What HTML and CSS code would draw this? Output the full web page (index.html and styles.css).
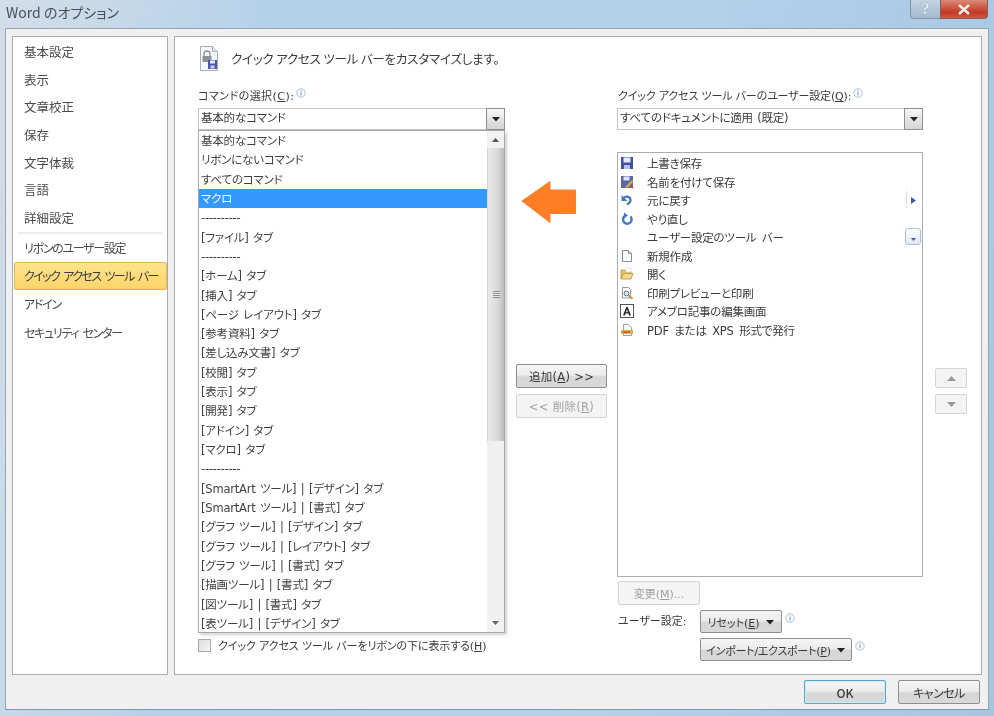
FILE: index.html
```
<!DOCTYPE html>
<html lang="ja">
<head>
<meta charset="utf-8">
<title>Word のオプション</title>
<link rel="stylesheet" href="styles.css">
</head>
<body>
<svg class="defs" width="0" height="0" aria-hidden="true">
  <symbol id="info" viewBox="0 0 10 10"><circle cx="5" cy="5" r="4.2" fill="#fff" stroke="#9db9dc" stroke-width=".9"/><rect x="4.5" y="4.2" width="1.1" height="3.2" fill="#6f97c9"/><rect x="4.5" y="2.4" width="1.1" height="1.1" fill="#6f97c9"/></symbol>
  <symbol id="down" viewBox="0 0 10 6"><path d="M1 1h8L5 5.4z" fill="#222"/></symbol>
</svg>
<div class="window">
  <header class="titlebar">
    <span class="title">Word のオプション</span>
    <div class="caption">
      <span class="cap-help">?</span>
      <span class="cap-close">
        <svg width="14" height="11" viewBox="0 0 14 11"><path d="M2 1l10 9M12 1L2 10" stroke="#f4e9e6" stroke-width="2.6"/></svg>
      </span>
    </div>
  </header>
  <div class="client">
    <div class="panels">
      <nav class="nav">
        <div class="nav-group">
          <div class="nav-item">基本設定</div>
          <div class="nav-item">表示</div>
          <div class="nav-item">文章校正</div>
          <div class="nav-item">保存</div>
          <div class="nav-item">文字体裁</div>
          <div class="nav-item">言語</div>
          <div class="nav-item">詳細設定</div>
        </div>
        <div class="nav-sep"></div>
        <div class="nav-group">
          <div class="nav-item2">リボンのユーザー設定</div>
          <div class="nav-item2 selected">クイック アクセス ツール バー</div>
          <div class="nav-item2">アドイン</div>
          <div class="nav-item2">セキュリティ センター</div>
        </div>
      </nav>
      <main class="main">
        <div class="heading">
          <svg class="heading-icon" width="20" height="27" viewBox="0 0 20 27">
            <path d="M1.5 1.5h12l5 5v19h-17z" fill="#f7f9fb" stroke="#9fb0c2"/>
            <path d="M13.5 1.5v5h5" fill="#dfe6ee" stroke="#9fb0c2"/>
            <path d="M5 11V9a3 3 0 0 1 6 0v2" fill="none" stroke="#8b8f96" stroke-width="1.3"/>
            <rect x="3.5" y="11" width="9" height="6" fill="#8d9199"/>
            <rect x="9" y="15" width="9" height="9" fill="#4a57b0"/>
            <rect x="11" y="15.5" width="5" height="3" fill="#e8ecf7"/>
            <rect x="11.5" y="20.5" width="4" height="3" fill="#c9cfe8"/>
          </svg>
          <span>クイック アクセス ツール バーをカスタマイズします。</span>
        </div>
        <div class="columns">
          <section class="col-left">
            <div class="label label-l">コマンドの選択(<u>C</u>):<svg class="info" width="10" height="10"><use href="#info"/></svg></div>
            <div class="combo">
              <span class="combo-text">基本的なコマンド</span>
              <span class="combo-btn"><svg width="10" height="6"><use href="#down"/></svg></span>
            </div>
            <div class="drop">
              <div class="drop-rows">
                <div class="row">基本的なコマンド</div>
                <div class="row">リボンにないコマンド</div>
                <div class="row">すべてのコマンド</div>
                <div class="row active">マクロ</div>
                <div class="row">----------</div>
                <div class="row">[ファイル] タブ</div>
                <div class="row">----------</div>
                <div class="row">[ホーム] タブ</div>
                <div class="row">[挿入] タブ</div>
                <div class="row">[ページ レイアウト] タブ</div>
                <div class="row">[参考資料] タブ</div>
                <div class="row">[差し込み文書] タブ</div>
                <div class="row">[校閲] タブ</div>
                <div class="row">[表示] タブ</div>
                <div class="row">[開発] タブ</div>
                <div class="row">[アドイン] タブ</div>
                <div class="row">[マクロ] タブ</div>
                <div class="row">----------</div>
                <div class="row">[SmartArt ツール] | [デザイン] タブ</div>
                <div class="row">[SmartArt ツール] | [書式] タブ</div>
                <div class="row">[グラフ ツール] | [デザイン] タブ</div>
                <div class="row">[グラフ ツール] | [レイアウト] タブ</div>
                <div class="row">[グラフ ツール] | [書式] タブ</div>
                <div class="row">[描画ツール] | [書式] タブ</div>
                <div class="row">[図ツール] | [書式] タブ</div>
                <div class="row">[表ツール] | [デザイン] タブ</div>
              </div>
              <div class="scrollbar">
                <div class="sb-arrow"><svg width="9" height="5" viewBox="0 0 9 5"><path d="M1 5h7L4.500 1z" fill="#555"/></svg></div>
                <div class="sb-thumb"><span class="grip"></span></div>
                <div class="sb-track"></div>
                <div class="sb-arrow"><svg width="9" height="5" viewBox="0 0 9 5"><path d="M1 0h7L4.500 4z" fill="#666"/></svg></div>
              </div>
            </div>
            <label class="check"><span class="checkbox"></span><span>クイック アクセス ツール バーをリボンの下に表示する(<u>H</u>)</span></label>
          </section>
          <section class="col-mid">
            <div class="btn btn-add"><span>追加(<u>A</u>) &gt;&gt;</span></div>
            <div class="btn disabled btn-del"><span>&lt;&lt; 削除(<u>R</u>)</span></div>
          </section>
          <section class="col-right">
            <div class="label label-r">クイック アクセス ツール バーのユーザー設定(<u>Q</u>):<svg class="info" width="10" height="10"><use href="#info"/></svg></div>
            <div class="combo">
              <span class="combo-text">すべてのドキュメントに適用 (既定)</span>
              <span class="combo-btn"><svg width="10" height="6"><use href="#down"/></svg></span>
            </div>
            <div class="qat">
              <div class="qat-row"><svg width="14" height="14" viewBox="0 0 14 14"><rect x="1" y="1" width="12" height="12" fill="#3f4fb3"/><rect x="3.500" y="1.500" width="7" height="5" fill="#e6eafa"/><rect x="4" y="9" width="6" height="4" fill="#b8c0e6"/></svg><span>上書き保存</span></div>
              <div class="qat-row"><svg width="14" height="14" viewBox="0 0 14 14"><rect x="1" y="1" width="12" height="12" fill="#5a66ad"/><rect x="3.500" y="1.500" width="6" height="4" fill="#dfe3f5"/><path d="M5 12l7-7 1.500 1.500-6 6.500z" fill="#d9a83a"/><path d="M11 11l2 2" stroke="#c7503a" stroke-width="2"/></svg><span>名前を付けて保存</span></div>
              <div class="qat-row"><svg width="14" height="14" viewBox="0 0 14 14"><path d="M3 5.500c3-3 7.500-2 7.500 1.500 0 2-1.500 3.500-3.500 4.500" fill="none" stroke="#3f78c8" stroke-width="2.200"/><path d="M1.500 2v6h6z" fill="#3f78c8"/></svg><span>元に戻す</span></div>
              <div class="qat-row"><svg width="14" height="14" viewBox="0 0 14 14"><path d="M5.500 3.500a4.300 4.300 0 1 0 5 1" fill="none" stroke="#3f78c8" stroke-width="2.400"/><path d="M4 .5v6l4-3z" fill="#3f78c8"/></svg><span>やり直し</span></div>
              <div class="qat-row"><span class="qat-blank"></span><span>ユーザー設定のツール バー</span></div>
              <div class="qat-row"><svg width="14" height="14" viewBox="0 0 14 14"><path d="M2.500 1.500h6l3 3v8h-9z" fill="#fff" stroke="#7f8fa6"/><path d="M8.500 1.500v3h3" fill="#dfe6f0" stroke="#7f8fa6"/></svg><span>新規作成</span></div>
              <div class="qat-row"><svg width="14" height="14" viewBox="0 0 14 14"><path d="M1 12V3h4l1 1.500h5V7" fill="#e5c46a" stroke="#b9923a" stroke-width=".8"/><path d="M1 12l2.500-5.500H13L11 12z" fill="#f3d98a" stroke="#b9923a" stroke-width=".8"/><rect x="6" y="1" width="5" height="4" fill="#fff" stroke="#c9ccd2" stroke-width=".6"/></svg><span>開く</span></div>
              <div class="qat-row"><svg width="14" height="14" viewBox="0 0 14 14"><path d="M2.500 1.500h6l2 2v8.500h-8z" fill="#fff" stroke="#8d99ab"/><circle cx="6.500" cy="7.500" r="2.400" fill="#dbe8f5" stroke="#566b8a"/><path d="M8.500 9.500l4 3" stroke="#c98c2e" stroke-width="1.800"/></svg><span>印刷プレビューと印刷</span></div>
              <div class="qat-row"><svg width="14" height="14" viewBox="0 0 14 14"><rect x=".5" y=".5" width="13" height="13" fill="#fff" stroke="#555"/><path d="M3 11.500L6.300 3h1.400L11 11.500H9.200l-.7-2h-3l-.7 2zM6 8.200h2L7 5.300z" fill="#222"/></svg><span>アメブロ記事の編集画面</span></div>
              <div class="qat-row"><svg width="14" height="14" viewBox="0 0 14 14"><path d="M3.500 1.500h5l3 3v8h-8z" fill="#f5f7fa" stroke="#98a3b3"/><rect x="1" y="7" width="12" height="4" fill="#e2b23f"/><path d="M3 9h7" stroke="#b33d2a" stroke-width="1.200"/></svg><span>PDF または XPS 形式で発行</span></div>
              <span class="qat-split"></span>
              <span class="qat-flyout"><svg width="5" height="7" viewBox="0 0 5 7"><path d="M0 0l5 3.500L0 7z" fill="#3f5fa8"/></svg></span>
              <span class="qat-more"><svg width="5" height="3" viewBox="0 0 5 3"><path d="M0 0h5L2.500 3z" fill="#3f5fa8"/></svg></span>
            </div>
            <div class="btn disabled btn-modify"><span>変更(<u>M</u>)...</span></div>
            <div class="user-row">
              <span class="user-label">ユーザー設定:</span>
              <div class="btn btn-reset"><span>リセット(<u>E</u>)</span><svg class="btn-caret" width="10" height="6"><use href="#down"/></svg></div>
              <svg class="info info-side" width="10" height="10"><use href="#info"/></svg>
            </div>
            <div class="import-row">
              <div class="btn btn-import"><span>インポート/エクスポート(<u>P</u>)</span><svg class="btn-caret" width="10" height="6"><use href="#down"/></svg></div>
              <svg class="info info-side" width="10" height="10"><use href="#info"/></svg>
            </div>
          </section>
          <section class="col-updown">
            <div class="btn disabled updown"><svg width="9" height="5" viewBox="0 0 9 5"><path d="M0 5h9L4.500 0z" fill="#9a9a9a"/></svg></div>
            <div class="btn disabled updown"><svg width="9" height="5" viewBox="0 0 9 5"><path d="M0 0h9L4.500 5z" fill="#9a9a9a"/></svg></div>
          </section>
        </div>
      </main>
    </div>
    <footer class="footer">
      <div class="btn btn-foot default">OK</div>
      <div class="btn btn-foot btn-cancel">キャンセル</div>
    </footer>
  </div>
  <svg class="pointer" width="56" height="44" viewBox="0 0 56 44"><path d="M1 21L29 1.500V10h25.500v23.500H29V42.500z" fill="#ff7f27" stroke="#ff7f27" stroke-linejoin="round"/></svg>
</div>
</body>
</html>
```

FILE: styles.css
```
* { box-sizing: border-box; }
html, body { margin: 0; padding: 0; background: #b0cde6; }
body {
  font-family: "DejaVu Sans", "Noto Sans CJK JP", sans-serif;
  font-size: 12px;
  font-feature-settings: "palt";
  color: #3a3a3a;
}
u { text-decoration-thickness: 1px; text-underline-offset: 1px; }
.defs { position: absolute; }
.window {
  position: relative;
  width: 994px;
  height: 716px;
  overflow: hidden;
  display: flex;
  flex-direction: column;
  padding: 0 5px 6px 5px;
  background: linear-gradient(100deg, #d2dee8 0, #b4d1ea 25%, #b5d2eb 60%, #a6c5de 100%);
  filter: blur(.45px);
}
.titlebar {
  height: 28px;
  flex: none;
  display: flex;
  justify-content: space-between;
  align-items: flex-start;
}
.title { font-family: "Noto Sans CJK JP", sans-serif; font-size: 14px; color: #4a4f55; line-height: 25px; padding-left: 1px; }
.caption { display: flex; margin-right: 1px; }
.cap-help {
  width: 30px; height: 19px;
  border: 1px solid #7f95a8; border-top: 0; border-right: 0;
  border-radius: 0 0 0 4px;
  background: linear-gradient(#c3d4e2, #a4bace);
  color: #e9eff4; font-family: "Liberation Serif", serif; font-weight: 700; font-size: 17px; line-height: 17px;
  text-align: center; text-shadow: 0 0 1px #5f7386;
}
.cap-close {
  width: 48px; height: 19px;
  border: 1px solid #8a5a55; border-top: 0;
  border-radius: 0 0 4px 0;
  background: linear-gradient(#d98a78 0, #cf5a44 40%, #c23a25 70%, #d0584a 100%);
  display: flex; align-items: center; justify-content: center;
}
.client {
  flex: 1;
  display: flex;
  flex-direction: column;
  background: #f0f0f0;
  border: 1px solid #9aa4ae;
  border-bottom-color: #7f99b2;
  padding: 7px 6px 0 6px;
}
.panels { display: flex; gap: 6px; height: 639px; }
.nav {
  width: 156px;
  flex: none;
  background: #fff;
  border: 1px solid #a9adb2;
  padding-top: 1px;
  font-family: "Noto Sans CJK JP", sans-serif;
}
.nav-item { height: 27.7px; line-height: 27.7px; padding-left: 11px; font-size: 12.500px; color: #4a4a4a; }
.nav-sep { height: 2px; margin: 0 4px 0 4px; background: #eeeeee; }
.nav-item2 { height: 28.300px; line-height: 28.300px; padding-left: 11px; letter-spacing: -1.300px; word-spacing: 3px; color: #4a4a4a; white-space: nowrap; }
.selected {
  margin: 0 0 0 1px;
  padding-left: 9px;
  background: linear-gradient(#fde38e, #fdd46a);
  border: 1px solid #e3b84f;
  border-radius: 2px;
  line-height: 26.300px;
  color: #3c3c3c;
  letter-spacing: -1.600px;
}
.main {
  flex: 1;
  background: #fff;
  border: 1px solid #a9adb2;
  padding: 8px 0 0 23px;
}
.heading { display: flex; align-items: center; gap: 12px; height: 27px; padding-left: 1px; font-family: "Noto Sans CJK JP", sans-serif; font-size: 12.500px; letter-spacing: -.2px; }
.columns {
  display: grid;
  grid-template-columns: 307px 91px 306px 32px;
  column-gap: 11px;
  margin-top: 16px;
}
.label { height: 20px; line-height: 16px; font-size: 11px; letter-spacing: -.15px; white-space: nowrap; }
.label-l { letter-spacing: .45px; }
.label-r { padding-left: 1px; }
.info { vertical-align: 2px; margin-left: 2px; }
.combo {
  height: 22px;
  border: 1px solid #c3c7cc;
  background: #fff;
  display: flex;
  justify-content: space-between;
  align-items: stretch;
}
.combo-text { padding-left: 2px; line-height: 19px; font-size: 11.500px; letter-spacing: -.2px; word-spacing: 1px; }
.combo-btn {
  width: 19px;
  margin: -1px -1px -1px 0;
  border: 1px solid #8f8f8f;
  background: linear-gradient(#f6f6f6, #d4d4d4);
  display: flex; align-items: center; justify-content: center;
}
.drop {
  display: flex;
  height: 503px;
  border: 1px solid #a5a9ad;
  background: #fff;
  box-shadow: 2px 2px 3px rgba(0,0,0,.18);
}
.drop-rows { flex: 1; min-width: 0; }
.row { height: 19.320px; padding-top: 1px; line-height: 18px; padding-left: 2px; font-size: 11.500px; letter-spacing: -.2px; word-spacing: 1px; white-space: nowrap; color: #3f3f3f; }
.row.active { background: #3399ff; color: #fff; }
.scrollbar { width: 17px; display: flex; flex-direction: column; background: #f0f0f0; }
.sb-arrow { height: 17px; flex: none; display: flex; align-items: center; justify-content: center; background: #f2f2f2; }
.sb-thumb {
  height: 293px; flex: none;
  background: linear-gradient(90deg, #eaeaea, #d9d9d9 60%, #bcbcbc);
  border-left: 1px solid #d5d5d5;
  display: flex; align-items: center; justify-content: center;
}
.grip { width: 7px; height: 7px; background: repeating-linear-gradient(#8f8f8f 0 1px, #e8e8e8 1px 2px); }
.sb-track { flex: 1; background: #f0f0f0; }
.check { display: flex; align-items: center; gap: 7px; margin-top: 4px; height: 16px; font-size: 11px; white-space: nowrap; letter-spacing: -.1px; }
.checkbox { width: 13px; height: 13px; flex: none; border: 1px solid #a9a9a9; background: linear-gradient(135deg, #dcdcdc, #f6f6f6); }
.col-mid { padding-top: 276px; display: flex; flex-direction: column; gap: 6px; }
.btn {
  display: flex; align-items: center; justify-content: center;
  border: 1px solid #8e8e8e;
  border-radius: 2px;
  background: linear-gradient(#f5f5f5 0, #ececec 45%, #d6d6d6 55%, #d9d9d9 100%);
  font-size: 11px;
  color: #3a3a3a;
  white-space: nowrap;
}
.btn.disabled {
  border-color: #d4d4d4;
  background: #f4f4f4;
  color: #a0a0a0;
}
.btn-add, .btn-del { height: 24px; font-size: 11.500px; letter-spacing: .3px; }
.col-right { margin-left: -1px; margin-right: 1px; }
.qat {
  position: relative;
  margin-top: 22px;
  height: 425px;
  border: 1px solid #a9adb2;
  background: #fff;
  padding-top: 1px;
}
.qat-row { display: flex; align-items: center; height: 18.500px; padding-left: 2px; gap: 13px; font-size: 11.500px; letter-spacing: -.2px; word-spacing: 2px; white-space: nowrap; }
.qat-row svg { flex: none; }
.qat-blank { width: 14px; flex: none; }
.qat-split { position: absolute; left: 288px; top: 38px; width: 1px; height: 17px; background: #d8dde4; }
.qat-flyout { position: absolute; left: 293px; top: 44px; display: flex; }
.qat-more {
  position: absolute; left: 287px; top: 75px; width: 16px; height: 17px;
  border: 1px solid #aebdd3; border-radius: 3px;
  background: linear-gradient(#fff, #dfe8f5);
  display: flex; align-items: flex-end; justify-content: center; padding-bottom: 3px;
}
.btn-modify { width: 82px; height: 24px; margin: 4px 0 0 1px; }
.user-row { display: flex; align-items: flex-start; margin-top: 5px; height: 28px; }
.user-label { width: 83px; padding-left: 1px; line-height: 23px; font-size: 11px; }
.btn-reset { width: 82px; height: 23px; }
.btn-caret { margin-left: 5px; }
.info-side { margin: 3px 0 0 3px; vertical-align: 0; flex: none; }
.import-row { display: flex; align-items: flex-start; padding-left: 83px; }
.btn-import { width: 152px; height: 23px; letter-spacing: -.25px; }
.col-updown { padding-top: 280px; display: flex; flex-direction: column; gap: 6px; }
.updown { height: 20px; }
.footer { display: flex; justify-content: flex-end; gap: 12px; padding: 5px 2px 0 0; }
.btn-foot { width: 82px; height: 24px; font-size: 12px; font-family: "Noto Sans CJK JP", sans-serif; }
.btn-cancel { letter-spacing: -.5px; }
.default { border: 1px solid #5aa6c9; box-shadow: inset 0 0 0 1px #cdeaf7; font-weight: 500; }
.pointer { position: absolute; left: 521px; top: 180px; }
```
